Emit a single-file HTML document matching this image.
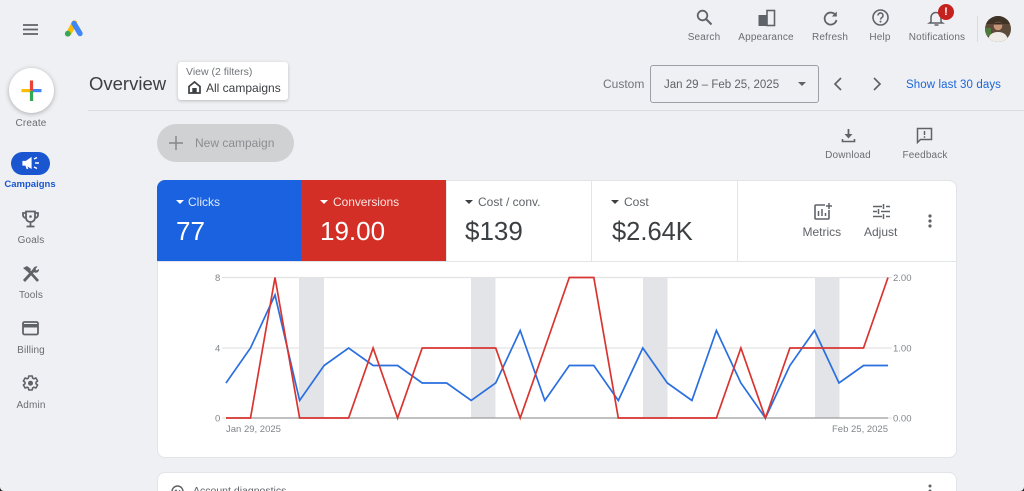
<!DOCTYPE html>
<html><head><meta charset="utf-8"><style>
html,body{margin:0;padding:0;width:1024px;height:491px;overflow:hidden;background:#eff0f3}
#w{position:relative;width:1024px;height:491px;overflow:hidden;background:#eff0f3;font-family:"Liberation Sans",sans-serif;color:#5f6368;filter:blur(.3px)}
.t{position:absolute;white-space:nowrap;line-height:1}
.c{transform:translateX(-50%);font-size:10px;letter-spacing:.15px;color:#6a6d72}
svg{position:absolute;overflow:visible}
.ic{fill:none;stroke:#5f6368;stroke-width:1.8}
.tile{position:absolute;top:180px;height:81px}
.lab{position:absolute;left:31px;top:16px;font-size:12px;line-height:1;white-space:nowrap}
.val{position:absolute;left:19px;top:38px;font-size:26px;line-height:1;white-space:nowrap}
.ar{position:absolute;left:19px;top:20px;width:0;height:0;border-left:4px solid transparent;border-right:4px solid transparent;border-top:4px solid currentColor}
</style></head><body><div id="w">

<!-- hamburger -->
<svg style="left:23px;top:24px" width="16" height="11"><path d="M0 1h15M0 5.500h15M0 10h15" stroke="#5f6368" stroke-width="1.700"/></svg>
<!-- logo -->
<svg style="left:64px;top:20px" width="20" height="18" viewBox="0 0 20 18">
<path d="M10.500 3 5 13" stroke="#fbbc04" stroke-width="5.400" stroke-linecap="round"/>
<path d="M10 3.500 16 13.500" stroke="#4285f4" stroke-width="5.400" stroke-linecap="round"/>
<circle cx="3.800" cy="13.700" r="2.900" fill="#34a853"/></svg>

<!-- create -->
<div style="position:absolute;left:9px;top:68px;width:45px;height:45px;border-radius:50%;background:#fff;box-shadow:0 1px 5px rgba(60,64,67,.4)"></div>
<svg style="left:21px;top:80px" width="21" height="21" viewBox="0 0 21 21">
<rect x="0.500" y="9" width="10" height="3.200" fill="#fbbc04"/><rect x="10" y="9" width="10.500" height="3.200" fill="#4285f4"/>
<rect x="8.900" y="0.500" width="3.200" height="10" fill="#ea4335"/><rect x="8.900" y="11" width="3.200" height="10" fill="#34a853"/></svg>
<div class="t c" style="left:31px;top:119px">Create</div>

<!-- nav -->
<div style="position:absolute;left:11px;top:152px;width:39px;height:23px;border-radius:12px;background:#1a56cf"></div>
<svg style="left:22px;top:156px" width="18" height="15" viewBox="0 0 18 15"><path d="M1 5.500h3l5-3.500v10L4 9H1z" fill="#fff" stroke="#fff" stroke-width="1.200"/><path d="M4 9l1.500 4" stroke="#fff" stroke-width="1.700"/><path d="M13 7h4M12 3l3-1.500M12 11l3 1.500" stroke="#fff" stroke-width="1.500"/></svg>
<div class="t c" style="left:30px;top:180px;color:#1a56cf;font-weight:bold;font-size:9.500px;letter-spacing:0">Campaigns</div>

<svg style="left:22px;top:210px" width="17" height="18" viewBox="0 0 17 18" class="ic"><path d="M4 1.500h9v6c0 2.800-2 4.500-4.500 4.500S4 10.300 4 7.500zM4 3H1v2c0 1.600 1.300 3 3 3M13 3h3v2c0 1.600-1.300 3-3 3M8.500 12v4M4.500 16.500h8"/><circle cx="8.500" cy="6.500" r="1.300" fill="#5f6368" stroke="none"/></svg>
<div class="t c" style="left:31px;top:236px">Goals</div>

<svg style="left:22px;top:265px" width="18" height="18" viewBox="0 0 18 18"><path d="M2 16 12 5M16 16 7 6" stroke="#5f6368" stroke-width="2.800"/><path d="M1 3l4-2 4 3-2 4zM11 5c0-2.500 2-4 4.500-3.500L13.500 4l1 1.500 2.500-1.500c.3 2.500-2 4.500-4.500 3.500z" fill="#5f6368"/></svg>
<div class="t c" style="left:31px;top:291px">Tools</div>

<svg style="left:22px;top:321px" width="17" height="15" viewBox="0 0 17 15"><rect x="1" y="1" width="15" height="12.500" rx="1.500" fill="none" stroke="#5f6368" stroke-width="1.800"/><rect x="1" y="3" width="15" height="3.500" fill="#5f6368"/></svg>
<div class="t c" style="left:31px;top:346px">Billing</div>

<svg style="left:22px;top:375px" width="17" height="17" viewBox="0 0 17 17" class="ic"><path d="M6.800 1h3.400l.4 2.100 1.300.7 2-.8 1.700 3-1.600 1.300v1.400l1.600 1.300-1.700 3-2-.8-1.300.7-.4 2.100H6.800l-.4-2.100-1.300-.7-2 .8-1.700-3L3 8.700V7.300L1.400 6l1.700-3 2 .8 1.300-.7z" stroke-width="1.600" stroke-linejoin="round"/><circle cx="8.500" cy="8.200" r="2.500" fill="#5f6368" stroke="none"/></svg>
<div class="t c" style="left:31px;top:401px">Admin</div>

<!-- top icons -->
<svg style="left:696px;top:9px" width="17" height="17" viewBox="0 0 17 17" class="ic"><circle cx="6.500" cy="6.500" r="4.800"/><path d="M10 10l5.500 5.500" stroke-width="2"/></svg>
<div class="t c" style="left:704px;top:33px">Search</div>
<svg style="left:758px;top:10px" width="17" height="16" viewBox="0 0 17 16"><rect x="0.500" y="5" width="8" height="11" fill="#5f6368"/><rect x="9" y="0.500" width="7.500" height="15" fill="none" stroke="#5f6368" stroke-width="1.600"/><rect x="1.200" y="5.800" width="5" height="9.400" fill="none" stroke="#5f6368"/></svg>
<div class="t c" style="left:766px;top:33px">Appearance</div>
<svg style="left:823px;top:10px" width="15" height="16" viewBox="0 0 15 16" class="ic"><path d="M12.500 5A6 6 0 1 0 13.500 10"/><path d="M13.800 1.500v5h-5z" fill="#5f6368" stroke="none"/></svg>
<div class="t c" style="left:830px;top:33px">Refresh</div>
<svg style="left:872px;top:9px" width="17" height="17" viewBox="0 0 17 17" class="ic"><circle cx="8.500" cy="8.500" r="7.500" stroke-width="1.600"/><path d="M6 6.500a2.500 2.500 0 1 1 3.800 2.100c-1 .7-1.300 1.100-1.300 2" stroke-width="1.500"/><circle cx="8.500" cy="12.600" r="1" fill="#5f6368" stroke="none"/></svg>
<div class="t c" style="left:880px;top:33px">Help</div>
<svg style="left:929px;top:10px" width="15" height="16" viewBox="0 0 15 16" class="ic"><path d="M2 12V7.500C2 4.500 4.300 2.500 7 2.500s5 2 5 5V12l1.500 1H.5z" stroke-width="1.500"/><path d="M5.500 15h4" stroke-width="1.500"/></svg>
<div style="position:absolute;left:938px;top:4px;width:16px;height:16px;border-radius:50%;background:#c5221f;color:#fff;font:bold 11px/16px 'Liberation Sans',sans-serif;text-align:center">!</div>
<div class="t c" style="left:937px;top:33px">Notifications</div>
<div style="position:absolute;left:977px;top:16px;width:1px;height:26px;background:#dadce0"></div>
<svg style="left:985px;top:16px" width="26" height="26" viewBox="0 0 26 26"><defs><clipPath id="av"><circle cx="13" cy="13" r="13"/></clipPath></defs><g clip-path="url(#av)"><rect width="26" height="26" fill="#5d4a38"/><rect x="0" y="0" width="26" height="8" fill="#3f3226"/><rect x="0" y="12" width="6" height="8" fill="#4c7a3a"/><path d="M3 26c0-7 4-10 10-10s10 3 10 10z" fill="#efece7"/><circle cx="13" cy="10" r="4.300" fill="#c8957a"/><path d="M9 8.500c1-3 7-3 8 0z" fill="#3a2a1e"/></g></svg>

<!-- header row -->
<div class="t" style="left:89px;top:75px;font-size:18.500px;color:#3c4043">Overview</div>
<div style="position:absolute;left:178px;top:62px;width:110px;height:38px;background:#fff;border-radius:3px;box-shadow:0 1px 3px rgba(60,64,67,.3)"></div>
<div class="t" style="left:186px;top:67px;font-size:10.500px;color:#70757a">View (2 filters)</div>
<svg style="left:188px;top:81px" width="13" height="13" viewBox="0 0 13 13"><path d="M1 12V5.500L6.500 1 12 5.500V12z" fill="none" stroke="#3c4043" stroke-width="1.700"/><rect x="4.300" y="7" width="4.400" height="5" fill="#3c4043"/></svg>
<div class="t" style="left:206px;top:82px;font-size:12px;color:#3c4043">All campaigns</div>
<div style="position:absolute;left:88px;top:110px;width:936px;height:1px;background:#dadce0"></div>

<div class="t" style="left:603px;top:78px;font-size:12px;color:#70757a">Custom</div>
<div style="position:absolute;left:650px;top:65px;width:167px;height:36px;border:1px solid #9aa0a6;border-radius:3px"></div>
<div class="t" style="left:664px;top:80px;font-size:11.500px;color:#5f6368;letter-spacing:0">Jan 29 – Feb 25, 2025</div>
<div style="position:absolute;left:798px;top:82px;border-left:4px solid transparent;border-right:4px solid transparent;border-top:4px solid #5f6368"></div>
<svg style="left:833px;top:77px" width="10" height="14"><path d="M8 1 2 7l6 6" fill="none" stroke="#5f6368" stroke-width="1.700"/></svg>
<svg style="left:872px;top:77px" width="10" height="14"><path d="M2 1l6 6-6 6" fill="none" stroke="#5f6368" stroke-width="1.700"/></svg>
<div class="t" style="left:906px;top:80px;font-size:11.500px;color:#1a66d9;letter-spacing:.1px">Show last 30 days</div>

<!-- new campaign -->
<div style="position:absolute;left:157px;top:124px;width:137px;height:38px;border-radius:19px;background:#d0d1d3"></div>
<svg style="left:169px;top:136px" width="14" height="14"><path d="M7 0v14M0 7h14" stroke="#85888c" stroke-width="1.500"/></svg>
<div class="t" style="left:195px;top:137px;font-size:12px;color:#8a8d91">New campaign</div>

<svg style="left:841px;top:128px" width="15" height="15" viewBox="0 0 15 15" class="ic"><path d="M7.500 1v8.500" stroke-width="1.800"/><path d="M3.500 6 7.500 10.500 11.500 6z" fill="#5f6368" stroke="none"/><path d="M1.500 11v2.500h12V11" stroke-width="1.600"/></svg>
<div class="t c" style="left:848px;top:151px">Download</div>
<svg style="left:916px;top:127px" width="17" height="17" viewBox="0 0 17 17" class="ic"><path d="M1.500 1.500h14v11H4.500l-3 3z" stroke-width="1.500"/><path d="M8.500 4v4M8.500 9.300v1.500" stroke-width="1.500"/></svg>
<div class="t c" style="left:925px;top:151px">Feedback</div>

<!-- main card -->
<div style="position:absolute;left:156.500px;top:179.500px;width:798px;height:276.500px;background:#fff;border:1px solid #e3e4e7;border-radius:8px"></div>
<div class="tile" style="left:157px;width:144px;background:#1a62e0;color:#dfe9fb;border-radius:8px 0 0 0"><div class="ar" style="color:#fff"></div><div class="lab">Clicks</div><div class="val" style="color:#fff">77</div></div>
<div class="tile" style="left:301px;width:145px;background:#d32f27;color:#fbe3e1"><div class="ar" style="color:#fff"></div><div class="lab" style="left:32px;letter-spacing:-.06px">Conversions</div><div class="val" style="color:#fff">19.00</div></div>
<div class="tile" style="left:447px;width:144px;color:#5f6368"><div class="ar" style="left:18px;color:#3c4043"></div><div class="lab" style="left:31px">Cost / conv.</div><div class="val" style="left:18px;color:#3c4043">$139</div></div>
<div class="tile" style="left:592px;width:145px;color:#5f6368"><div class="ar" style="left:19px;color:#3c4043"></div><div class="lab" style="left:32px">Cost</div><div class="val" style="left:20px;top:40px;font-size:25.500px;color:#3c4043">$2.64K</div></div>
<div style="position:absolute;left:446px;top:180px;width:1px;height:81px;background:#e3e4e7"></div>
<div style="position:absolute;left:591px;top:180px;width:1px;height:81px;background:#e3e4e7"></div>
<div style="position:absolute;left:737px;top:180px;width:1px;height:81px;background:#e3e4e7"></div>
<div style="position:absolute;left:157px;top:261px;width:799px;height:1px;background:#e3e4e7"></div>

<svg style="left:814px;top:203px" width="18" height="17" viewBox="0 0 18 17" class="ic"><path d="M11 2H2a1 1 0 0 0-1 1v12a1 1 0 0 0 1 1h12a1 1 0 0 0 1-1V7" stroke-width="1.600"/><path d="M15 0v6M12 3h6M4.500 8v5M8 6v7M11.500 10v3" stroke-width="1.500"/></svg>
<div class="t" style="left:802.500px;top:226px;font-size:12px;color:#5f6368">Metrics</div>
<svg style="left:873px;top:204px" width="17" height="15" viewBox="0 0 17 15" class="ic"><path d="M0 2.500h9M13 2.500h4M0 7.500h4M8 7.500h9M0 12.500h9M13 12.500h4M10.500 0v5M5.500 5v5M10.500 10v5" stroke-width="1.500"/></svg>
<div class="t" style="left:864px;top:226px;font-size:12px;color:#5f6368">Adjust</div>
<svg style="left:928px;top:214px" width="4" height="14"><circle cx="2" cy="2" r="1.600" fill="#5f6368"/><circle cx="2" cy="7" r="1.600" fill="#5f6368"/><circle cx="2" cy="12" r="1.600" fill="#5f6368"/></svg>

<!-- chart -->
<svg style="left:0;top:0" width="1024" height="491">
<g fill="#e3e4e8"><rect x="299" y="277.500" width="25" height="140.500"/><rect x="471" y="277.500" width="24.500" height="140.500"/><rect x="643" y="277.500" width="24.500" height="140.500"/><rect x="815" y="277.500" width="24.500" height="140.500"/></g>
<path d="M226 277.500H888M226 348H888" stroke="#e3e3e3" stroke-width="1.300"/>
<path d="M226 418H888" stroke="#9b9b9b" stroke-width="1.300"/>
<path d="M222 277.500h4M222 348h4M222 418h4M888 277.500h4M888 348h4M888 418h4" stroke="#dedede" stroke-width="1"/>
<polyline fill="none" stroke="#2a6fe0" stroke-width="1.700" stroke-linejoin="miter" points="226,383 250.500,348 275,295 299.600,400.500 324.100,365.500 348.600,348 373.100,365.500 397.600,365.500 422.200,383 446.700,383 471.200,400.500 495.700,383 520.200,330.500 544.800,400.500 569.300,365.500 593.800,365.500 618.300,400.500 642.800,348 667.300,383 691.900,400.500 716.400,330.500 740.900,383 765.400,418 789.900,365.500 814.500,330.500 839,383 863.500,365.500 888,365.500"/>
<polyline fill="none" stroke="#d93530" stroke-width="1.700" stroke-linejoin="miter" points="226,418 250.500,418 275,277.500 299.600,418 324.100,418 348.600,418 373.100,348 397.600,418 422.200,348 446.700,348 471.200,348 495.700,348 520.200,418 544.800,348 569.300,277.500 593.800,277.500 618.300,418 642.800,418 667.300,418 691.900,418 716.400,418 740.900,348 765.400,418 789.900,348 814.500,348 839,348 863.500,348 888,277.500"/>
<g font-family="'Liberation Sans',sans-serif" font-size="9.500" fill="#80868b">
<text x="215" y="281">8</text><text x="215" y="351.500">4</text><text x="215" y="421.500">0</text>
<text x="893" y="281">2.00</text><text x="893" y="351.500">1.00</text><text x="893" y="421.500">0.00</text>
<text x="226" y="432">Jan 29, 2025</text><text x="888" y="432" text-anchor="end">Feb 25, 2025</text></g>
</svg>

<!-- second card -->
<div style="position:absolute;left:156.500px;top:471.500px;width:798px;height:40px;background:#fff;border:1px solid #e3e4e7;border-radius:8px"></div>
<svg style="left:171px;top:485px" width="13" height="13" viewBox="0 0 13 13"><circle cx="6.500" cy="6.500" r="5.500" fill="none" stroke="#5f6368" stroke-width="1.500"/><path d="M3 7l2-2 2 3 2-3" fill="none" stroke="#5f6368"/></svg>
<div class="t" style="left:193px;top:486px;font-size:10.500px;color:#5f6368">Account diagnostics</div>
<svg style="left:927.500px;top:484px" width="4" height="10"><circle cx="2" cy="2" r="1.500" fill="#5f6368"/><circle cx="2" cy="7" r="1.500" fill="#5f6368"/></svg>

<!-- window corners -->
<svg style="left:0;top:487px" width="4" height="4"><path d="M0 0v4h4A4 4 0 0 1 0 0z" fill="#222"/></svg>
<svg style="left:1020px;top:487px" width="4" height="4"><path d="M4 0v4H0A4 4 0 0 0 4 0z" fill="#222"/></svg>
</div></body></html>
